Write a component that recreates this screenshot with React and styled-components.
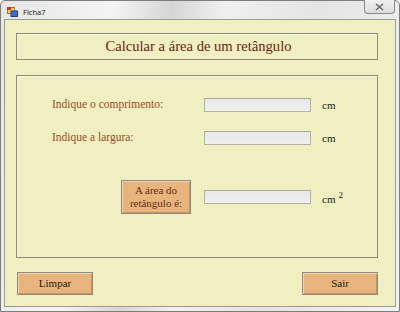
import React from "react";
import styled, { createGlobalStyle } from "styled-components";

const Global = createGlobalStyle`
  html, body { margin: 0; padding: 0; }
  body { width: 400px; height: 312px; overflow: hidden; background: #fff; }
`;

const Window = styled.div`
  box-sizing: border-box;
  width: 400px;
  height: 312px;
  border: 1px solid #7d7d7d;
  border-radius: 5px 5px 0 0;
  background: linear-gradient(100deg, #e6e6e6 0%, #f4f4f4 25%, #d6d6d6 38%, #f0f0f0 50%, #e4e4e4 70%, #f2f2f2 100%);
  padding: 0 3px 4px 3px;
  display: flex;
  flex-direction: column;
  font-family: "Liberation Serif", "DejaVu Serif", serif;
`;

const TitleBar = styled.div`
  height: 19px;
  display: flex;
  align-items: center;
  position: relative;
  padding-left: 3px;
  gap: 5px;
`;

const TitleText = styled.span`
  font-family: "Noto Sans", "DejaVu Sans", sans-serif;
  font-size: 7.5px;
  color: #1a1a1a;
  margin-top: 3px;
`;

const CloseButton = styled.div`
  position: absolute;
  right: 1px;
  top: -1px;
  width: 31px;
  height: 14px;
  box-sizing: border-box;
  border: 1px solid #8a8a8a;
  border-top: none;
  border-radius: 0 0 4px 4px;
  background: linear-gradient(#f2f2f2, #dcdcdc);
  display: flex;
  align-items: center;
  justify-content: center;
`;

const Client = styled.div`
  flex: 1;
  box-sizing: border-box;
  border: 1px solid #9a9a9a;
  background: #efefc2;
  padding: 13px 17px 11px 11px;
  display: flex;
  flex-direction: column;
`;

const GroupBox = styled.div`
  box-sizing: border-box;
  border: 1px solid #8c8a78;
  box-shadow: inset 1px 1px 0 #f8f8e0;
  height: ${(p) => p.$h}px;
  margin-top: ${(p) => p.$mt || 0}px;
`;

const TitleGroup = styled(GroupBox)`
  display: flex;
  align-items: center;
  justify-content: center;
`;

const Heading = styled.h1`
  margin: 0;
  font-weight: normal;
  font-size: 14.6px;
  color: #6a1e0e;
  padding-left: 3px;
`;

const Form = styled.div`
  display: flex;
  flex-direction: column;
  padding: 22px 0 0 35px;
`;

const Row = styled.div`
  display: grid;
  grid-template-columns: 139px 107px auto;
  column-gap: 12px;
  align-items: center;
  height: ${(p) => p.$h}px;
  margin-top: ${(p) => p.$mt || 0}px;
`;

const Label = styled.span`
  font-size: 11.5px;
  color: #9c4a22;
  margin-top: -2px;
`;

const TextBox = styled.div`
  box-sizing: border-box;
  height: 14px;
  width: 107px;
  margin-left: 1px;
  border: 1px solid #b4b2a4;
  border-top-color: #a8a698;
  background: linear-gradient(#e8e8e8, #efefef);
`;

const Unit = styled.span`
  font-size: 11px;
  color: #1a1a1a;
  sup { font-size: 9px; margin-left: 3px; }
`;

const Button = styled.div`
  box-sizing: border-box;
  width: ${(p) => p.$w}px;
  height: ${(p) => p.$h}px;
  background: #e6b47c;
  border: 1px solid #8e8a80;
  box-shadow: inset 1px 1px 0 #f2d2aa, inset -1px -1px 0 #c9955e;
  display: flex;
  align-items: center;
  justify-content: center;
  text-align: center;
  font-size: 11px;
  line-height: 13px;
  color: ${(p) => p.$color || "#2a1a10"};
`;

const AreaButton = styled(Button)`
  justify-self: end;
`;

const Footer = styled.div`
  display: flex;
  justify-content: space-between;
  margin-top: 14px;
  padding: 0 0 0 1px;
`;

const AppIcon = () => (
  <svg width="11" height="10" viewBox="0 0 11 10" style={{ marginTop: 3 }}>
    <rect x="0.5" y="0.5" width="7" height="6" fill="#f4d84a" stroke="#b07020" strokeWidth="1" />
    <rect x="0" y="0" width="4" height="3" fill="#d83020" />
    <rect x="4" y="4" width="6.5" height="5.5" fill="#3a6fd0" stroke="#1e3f8a" strokeWidth="1" />
  </svg>
);

export default function App() {
  return (
    <>
      <Global />
      <Window>
        <TitleBar>
          <AppIcon />
          <TitleText>Ficha7</TitleText>
          <CloseButton>
            <svg width="9" height="8" viewBox="0 0 9 8">
              <path d="M1 1 L8 7 M8 1 L1 7" stroke="#6a6a6a" strokeWidth="1.6" />
            </svg>
          </CloseButton>
        </TitleBar>
        <Client>
          <TitleGroup $h={27}>
            <Heading>Calcular a área de um retângulo</Heading>
          </TitleGroup>
          <GroupBox $h={183} $mt={15}>
            <Form>
              <Row $h={14}>
                <Label>Indique o comprimento:</Label>
                <TextBox />
                <Unit>cm</Unit>
              </Row>
              <Row $h={14} $mt={19}>
                <Label>Indique a largura:</Label>
                <TextBox />
                <Unit>cm</Unit>
              </Row>
              <Row $h={34} $mt={35}>
                <AreaButton $w={70} $h={34} $color="#6b2c18">
                  A área do
                  <br />
                  retângulo é:
                </AreaButton>
                <TextBox />
                <Unit>
                  cm<sup>2</sup>
                </Unit>
              </Row>
            </Form>
          </GroupBox>
          <Footer>
            <Button $w={76} $h={23}>Limpar</Button>
            <Button $w={76} $h={23}>Sair</Button>
          </Footer>
        </Client>
      </Window>
    </>
  );
}
